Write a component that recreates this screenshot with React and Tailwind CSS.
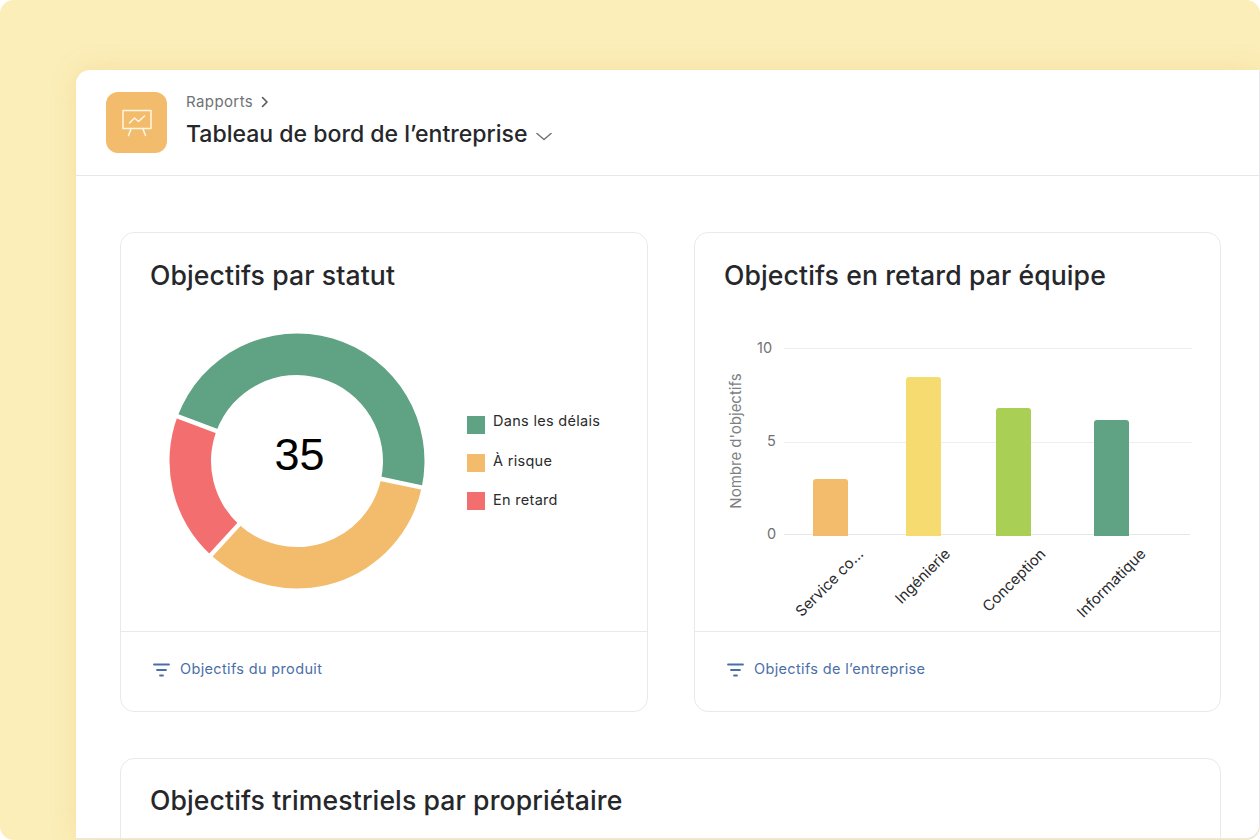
const fontInter = 'font-["Inter","Liberation_Sans",sans-serif]';

function Donut() {
  const cx = 128;
  const cy = 128;
  const outer = 127.5;
  const inner = 86;
  const pt = (r, deg) => {
    const a = (deg * Math.PI) / 180;
    return `${(cx + r * Math.sin(a)).toFixed(2)} ${(cy - r * Math.cos(a)).toFixed(2)}`;
  };
  const seg = (from, to) => {
    const big = to - from > 180 ? 1 : 0;
    return `M${pt(outer, from)} A${outer} ${outer} 0 ${big} 1 ${pt(outer, to)} L${pt(inner, to)} A${inner} ${inner} 0 ${big} 0 ${pt(inner, from)} Z`;
  };
  return (
    <svg width="256" height="256" viewBox="0 0 256 256" className="block">
      <path d={seg(-69.5, 102)} fill="#5fa284" />
      <path d={seg(102, 222.5)} fill="#f2bc6c" />
      <path d={seg(222.5, 290.5)} fill="#f36e6e" />
      {/* white gaps between the slices */}
      {[-69.5, 102, 222.5].map(deg => (
        <path key={deg} d={`M${pt(inner - 2, deg)} L${pt(outer + 2, deg)}`} stroke="#fff" strokeWidth="4.5" />
      ))}
    </svg>
  );
}

function FilterIcon() {
  return (
    <svg width="17" height="14" viewBox="0 0 17 14" fill="none" stroke="#4a6fa8" strokeWidth="1.8" strokeLinecap="round" className="-mt-[4px]">
      <path d="M1 1.5h15M4 7h9M7 12.5h3" />
    </svg>
  );
}

function Legend({ color, label, shift }) {
  return (
    <div className="flex items-center gap-[8px] h-[18px]">
      <span className={`w-[18px] h-[18px] ${color}`} />
      <span className={`text-[14.5px] leading-[18px] text-[#2a2b2d] tracking-[0.3px] ${shift}`}>{label}</span>
    </div>
  );
}

function Bar({ left, height, color }) {
  return <div className={`absolute bottom-0 w-[35px] rounded-t-[3px] ${color}`} style={{ left, height }} />;
}

function BarChart() {
  const labels = [
    { text: 'Service co...', right: 366 },
    { text: 'Ingénierie', right: 279 },
    { text: 'Conception', right: 183 },
    { text: 'Informatique', right: 83 },
  ];
  return (
    <div className="relative h-[290px] ml-[29px]">
      <div className="absolute left-[12px] top-[103px] -translate-x-1/2 -translate-y-1/2 -rotate-90 whitespace-nowrap text-[15px] text-[#7c7f83]">
        Nombre d'objectifs
      </div>
      <div className="absolute left-[33px] top-px text-[14.5px] leading-[18px] text-[#6f7276]">10</div>
      <div className="absolute left-[43px] top-[94px] text-[14.5px] leading-[18px] text-[#6f7276]">5</div>
      <div className="absolute left-[43px] top-[187px] text-[14.5px] leading-[18px] text-[#6f7276]">0</div>
      <div className="absolute left-[60px] right-[28px] top-[10px] h-px bg-[#edeef0]" />
      <div className="absolute left-[60px] right-[28px] top-[104px] h-px bg-[#edeef0]" />
      <div className="absolute left-[60px] right-[30px] top-[196px] h-px bg-[#e6e7e9]" />
      <div className="absolute left-0 top-0 w-full h-[198px]">
        <Bar left={89} height={57} color="bg-[#f2bc6c]" />
        <Bar left={182} height={159} color="bg-[#f6dc70]" />
        <Bar left={272} height={128} color="bg-[#aacf55]" />
        <Bar left={370} height={116} color="bg-[#5fa284]" />
      </div>
      {labels.map(l => (
        <div
          key={l.text}
          className="absolute top-[207px] origin-top-right -rotate-45 whitespace-nowrap text-[15px] leading-[18px] text-[#2a2b2d]"
          style={{ right: l.right }}
        >
          {l.text}
        </div>
      ))}
    </div>
  );
}

function Card({ title, className, children, footer, titleClass = 'pt-[24px]' }) {
  return (
    <div className={`border border-[#e8e9eb] rounded-[14px] bg-white ${className}`}>
      <h2 className={`pl-[29px] h-[60px] text-[26.6px] leading-[36px] text-[#26272a] font-medium tracking-[0.1px] ${titleClass}`}>{title}</h2>
      {children}
      {footer && (
        <div className="border-t border-[#e8e9eb] h-[80px] pl-[32px] flex items-center gap-[10px]">
          <FilterIcon />
          <span className="text-[14.5px] text-[#4a6fa8] tracking-[0.35px] -mt-[6px]">{footer}</span>
        </div>
      )}
    </div>
  );
}

export default function App() {
  return (
    <div className="w-[1260px] h-[840px] bg-white">
      <div className={`w-full h-full overflow-hidden rounded-[14px] bg-[#fceeb9] pt-[70px] pl-[76px] ${fontInter}`}>
        <div className="h-[769px] overflow-hidden rounded-tl-[14px] rounded-br-[14px] bg-white shadow-[0_0_28px_rgba(190,150,40,0.16)] border-b border-r border-[#e8e8ea]">
          <header className="h-[106px] border-b border-[#e6e7e9] pl-[30px] pt-[22px] flex gap-[19px]">
            <div className="w-[61px] h-[61px] rounded-[12px] bg-[#f2bc6c] flex items-center justify-center">
              <svg width="32" height="28" viewBox="0 0 32 28" fill="none" stroke="#fff6e3" strokeWidth="1.5" strokeLinecap="round" strokeLinejoin="round">
                <path d="M2 1.5h28v18H2zM10 20l-2.5 6.5M22 20l2.5 6.5" />
                <path d="M8.5 14l5-5 4 3.5 6-5.5" />
              </svg>
            </div>
            <div>
              <div className="flex items-center gap-[8px] h-[20px] text-[15px] text-[#6f7276] tracking-[0.4px]">
                Rapports
                <svg width="8" height="12" viewBox="0 0 8 12" fill="none" stroke="#55585c" strokeWidth="1.6" strokeLinecap="round" strokeLinejoin="round">
                  <path d="M1.5 1.5 6 6l-4.5 4.5" />
                </svg>
              </div>
              <div className="flex items-center gap-[9px] mt-[4px] h-[36px]">
                <h1 className="text-[23.05px] leading-[36px] text-[#26272a] font-medium">Tableau de bord de l’entreprise</h1>
                <svg width="16" height="9" viewBox="0 0 16 9" fill="none" stroke="#6f7276" strokeWidth="1.5" strokeLinecap="round" strokeLinejoin="round" className="mt-[4px]">
                  <path d="M1 1.5 8 7.5l7-6" />
                </svg>
              </div>
            </div>
          </header>
          <main className="pl-[44px] pt-[56px]">
            <div className="grid grid-cols-[528px_527px] gap-x-[46px]">
              <Card title="Objectifs par statut" className="h-[480px]" footer="Objectifs du produit">
                <div className="h-[338px] flex items-start">
                  <div className="relative ml-[48px] mt-[40px] w-[256px] h-[256px]">
                    <Donut />
                    <div className="absolute inset-0 flex items-center justify-center pl-[5px] pb-[12px] text-[45px] text-black font-['Liberation_Sans',sans-serif]">35</div>
                  </div>
                  <div className="ml-[42px] mt-[123px] flex flex-col gap-[20px]">
                    <Legend color="bg-[#5fa284]" label="Dans les délais" shift="-translate-y-[4px]" />
                    <Legend color="bg-[#f2bc6c]" label="À risque" shift="-translate-y-[2px]" />
                    <Legend color="bg-[#f36e6e]" label="En retard" shift="-translate-y-[1px]" />
                  </div>
                </div>
              </Card>
              <Card title="Objectifs en retard par équipe" className="h-[480px]" footer="Objectifs de l’entreprise">
                <div className="h-[338px] pt-[45px]">
                  <BarChart />
                </div>
              </Card>
            </div>
            <div className="mt-[46px]">
              <Card title="Objectifs trimestriels par propriétaire" className="h-[200px] w-[1101px]" titleClass="pt-[23px]" />
            </div>
          </main>
        </div>
      </div>
    </div>
  );
}
